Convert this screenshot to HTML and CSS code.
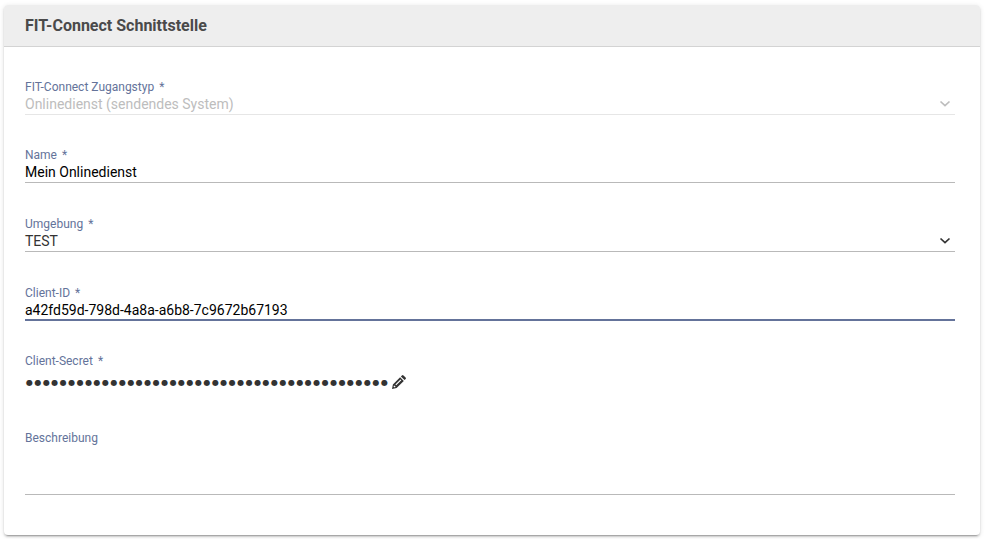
FILE: index.html
```html
<!DOCTYPE html>
<html lang="de">
<head>
<meta charset="utf-8">
<title>FIT-Connect Schnittstelle</title>
<link rel="stylesheet" href="styles.css">
</head>
<body>
<section class="card">
  <header class="card-header">FIT-Connect Schnittstelle</header>
  <div class="card-body">
    <div class="field field-disabled">
      <div class="label">FIT-Connect Zugangstyp<span class="required">*</span></div>
      <div class="value"><span>Onlinedienst (sendendes System)</span>
        <svg class="chevron" viewBox="0 0 12 8"><path d="M1.5 1.5 6 5.7 10.5 1.5"/></svg></div>
    </div>
    <div class="field">
      <div class="label">Name<span class="required">*</span></div>
      <div class="value value-input">Mein Onlinedienst</div>
    </div>
    <div class="field">
      <div class="label">Umgebung<span class="required">*</span></div>
      <div class="value"><span>TEST</span>
        <svg class="chevron" viewBox="0 0 12 8"><path d="M1.5 1.5 6 5.7 10.5 1.5"/></svg></div>
    </div>
    <div class="field field-focused">
      <div class="label">Client-ID<span class="required">*</span></div>
      <div class="value value-input">a42fd59d-798d-4a8a-a6b8-7c9672b67193</div>
    </div>
    <div class="field field-secret">
      <div class="label">Client-Secret<span class="required">*</span></div>
      <div class="secret"><span class="dots">●●●●●●●●●●●●●●●●●●●●●●●●●●●●●●●●●●●●●●●●●●●</span>
        <svg class="pencil" viewBox="0 0 14 14"><path d="M0 14 .9 9.4 8.1 2.2 11.8 5.9 4.6 13.1ZM8.9 1.4 9.9.4Q10.7-.3 11.5.4L13.6 2.5Q14.3 3.3 13.6 4.1L12.6 5.1Z"/><path class="pencil-cut" d="M1.8 10.8 3.2 12.2M3.8 9.9 8.9 4.8"/></svg></div>
    </div>
    <div class="field">
      <div class="label">Beschreibung</div>
      <div class="value value-area"></div>
    </div>
  </div>
</section>
</body>
</html>
```

FILE: styles.css
```css
* {
  box-sizing: border-box;
}

body {
  margin: 0;
  padding: 5px 5px 4px 4px;
  background: #fff;
  font-family: Roboto, "Liberation Sans", sans-serif;
  overflow: hidden;
}

.card {
  height: 530px;
  background: #fff;
  border-radius: 4px;
  box-shadow: 0 3px 1px -2px rgba(0, 0, 0, .2),
    0 2px 2px 0 rgba(0, 0, 0, .14),
    0 1px 5px 0 rgba(0, 0, 0, .12);
}

.card-header {
  height: 42px;
  padding-left: 21px;
  background: #eee;
  border-bottom: 1px solid #d3d3d3;
  border-radius: 4px 4px 0 0;
  color: #4a4a4a;
  font-size: 16px;
  font-weight: 700;
  line-height: 42px;
}

.card-body {
  padding: 33px 25px 0 21px;
}

.field {
  height: 69px;
}

.field-disabled {
  height: 68px;
}

.field-focused {
  height: 68px;
}

.field-secret {
  height: 77px;
}

.label {
  height: 15px;
  color: #64739a;
  font-size: 12px;
  line-height: 15px;
}

.required {
  margin-left: 5px;
}

.value {
  display: flex;
  align-items: flex-start;
  justify-content: space-between;
  height: 20px;
  border-bottom: 1px solid #b9b9b9;
  color: #333;
  font-size: 14px;
  line-height: 19px;
}

.value-input {
  color: #000;
}

.field-disabled .value {
  border-color: #e6e6e6;
  color: #bdbdbd;
}

.field-focused .value {
  border-bottom: 2px solid #64739a;
}

.value-area {
  height: 49px;
}

.chevron {
  width: 12px;
  height: 8px;
  margin: 5px 4px 0 0;
  fill: none;
  stroke: currentColor;
  stroke-width: 1.7;
}

.secret {
  display: flex;
  align-items: center;
  height: 26px;
  color: #333;
}

.dots {
  width: 364px;
  padding: 2px 0 0 1px;
  font-family: "DejaVu Sans", sans-serif;
  font-size: 8px;
  letter-spacing: 1.47px;
  line-height: 26px;
  white-space: nowrap;
}

.pencil {
  width: 14px;
  height: 14px;
  margin-left: 3px;
  fill: #333;
}

.pencil-cut {
  fill: none;
  stroke: #fff;
  stroke-width: 1.2;
}
```
